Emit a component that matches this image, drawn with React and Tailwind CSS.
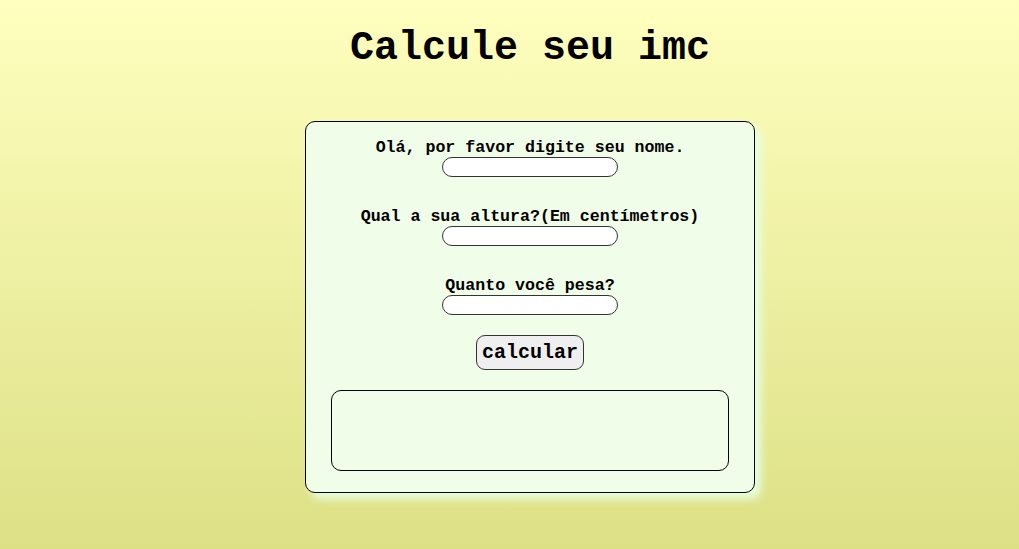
import React from "react";

const Field = ({ label }) => (
  <div className="flex flex-col items-center">
    <label className="text-[16.6px] leading-[18px] font-bold">{label}</label>
    <input
      type="text"
      className="w-[176px] h-[20px] bg-white border border-[#333] rounded-[10px] px-2 outline-none"
    />
  </div>
);

export default function App() {
  return (
    <div
      className="min-h-[549px] w-full bg-gradient-to-b from-[#ffffbf] to-[#dde085] text-black flex flex-col items-center pl-[41px]"
      style={{ fontFamily: '"Liberation Mono", "Courier New", monospace' }}
    >
      <h1 className="mt-[27px] text-[40px] leading-[44px] font-bold">Calcule seu imc</h1>

      <div className="mt-[50px] w-[450px] bg-[#f0fde8] border border-black rounded-[10px] pt-[17px] pb-[21px] px-[25px] flex flex-col items-center shadow-[6px_6px_8px_#e6ffe0]">
        <div className="flex flex-col gap-[31px]">
          <Field label="Olá, por favor digite seu nome." />
          <Field label="Qual a sua altura?(Em centímetros)" />
          <Field label="Quanto você pesa?" />
        </div>

        <button className="mt-[20px] h-[35px] px-[5px] bg-[#efefef] border border-[#333] rounded-[9px] text-[20px] font-bold">
          calcular
        </button>

        <div className="mt-[20px] w-full h-[81px] border border-black rounded-[10px]"></div>
      </div>
    </div>
  );
}
